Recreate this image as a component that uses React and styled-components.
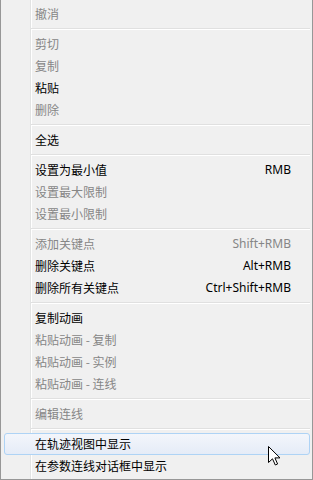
import React from 'react';
import styled, { createGlobalStyle } from 'styled-components';

const GlobalStyle = createGlobalStyle`
  html, body {
    margin: 0;
    padding: 0;
    background: #f0f0f0;
  }
`;

// Menu frame, with the icon gutter line drawn in the background
const Menu = styled.div`
  position: relative;
  box-sizing: border-box;
  width: 313px;
  height: 480px;
  padding: 3px 2px 2px 3px;
  border: 1px solid #979797;
  border-top: none;
  background: linear-gradient(
    to right,
    #f0f0f0 29px,
    #e2e3e3 29px,
    #e2e3e3 30px,
    #ffffff 30px,
    #ffffff 31px,
    #f0f0f0 31px
  );
  font-family: "Noto Sans", "Noto Sans CJK SC", sans-serif;
  font-size: 12px;
  display: flex;
  flex-direction: column;
`;

const Item = styled.div`
  box-sizing: border-box;
  height: 22px;
  padding: 0 18px 0 30px;
  display: flex;
  align-items: center;
  justify-content: space-between;
  border: 1px solid ${({ $hover }) => ($hover ? '#aed3f5' : 'transparent')};
  border-radius: 3px;
  background: ${({ $hover }) =>
    $hover ? 'linear-gradient(to bottom, #f3f6fb, #e5ecf7)' : 'transparent'};
  color: ${({ $disabled }) => ($disabled ? '#868686' : '#000000')};
  white-space: nowrap;
  line-height: 1;
`;

const Label = styled.span`
  font-family: "Noto Sans CJK SC", sans-serif;
`;

const Shortcut = styled.span`
  font-family: "Noto Sans", "Open Sans", sans-serif;
`;

const Separator = styled.div`
  height: 8px;
  margin-left: 27px;
  margin-right: 0;
  display: flex;
  flex-direction: column;
  justify-content: center;

  &::before {
    content: '';
    display: block;
    height: 1px;
    background: #e0e0e0;
  }
  &::after {
    content: '';
    display: block;
    height: 1px;
    background: #ffffff;
  }
`;

const Cursor = styled.svg`
  position: absolute;
  left: 267px;
  top: 446px;
`;

const items = [
  { label: '撤消', disabled: true },
  'sep',
  { label: '剪切', disabled: true },
  { label: '复制', disabled: true },
  { label: '粘贴' },
  { label: '删除', disabled: true },
  'sep',
  { label: '全选' },
  'sep',
  { label: '设置为最小值', key: 'RMB' },
  { label: '设置最大限制', disabled: true },
  { label: '设置最小限制', disabled: true },
  'sep',
  { label: '添加关键点', key: 'Shift+RMB', disabled: true },
  { label: '删除关键点', key: 'Alt+RMB' },
  { label: '删除所有关键点', key: 'Ctrl+Shift+RMB' },
  'sep',
  { label: '复制动画' },
  { label: '粘贴动画 - 复制', disabled: true },
  { label: '粘贴动画 - 实例', disabled: true },
  { label: '粘贴动画 - 连线', disabled: true },
  'sep',
  { label: '编辑连线', disabled: true },
  'sep',
  { label: '在轨迹视图中显示', hover: true },
  { label: '在参数连线对话框中显示' },
];

export default function App() {
  return (
    <>
      <GlobalStyle />
      <Menu>
        {items.map((it, i) =>
          it === 'sep' ? (
            <Separator key={i} />
          ) : (
            <Item key={i} $disabled={it.disabled} $hover={it.hover}>
              <Label>{it.label}</Label>
              {it.key && <Shortcut>{it.key}</Shortcut>}
            </Item>
          )
        )}
        <Cursor width="14" height="21" viewBox="0 0 14 21">
          <path
            d="M0.5 0.5 L0.5 16.5 L4.5 12.8 L7.3 19 L9.6 18 L6.9 11.9 L12 11.9 Z"
            fill="#ffffff"
            stroke="#000000"
            strokeWidth="1"
            strokeLinejoin="miter"
          />
        </Cursor>
      </Menu>
    </>
  );
}
